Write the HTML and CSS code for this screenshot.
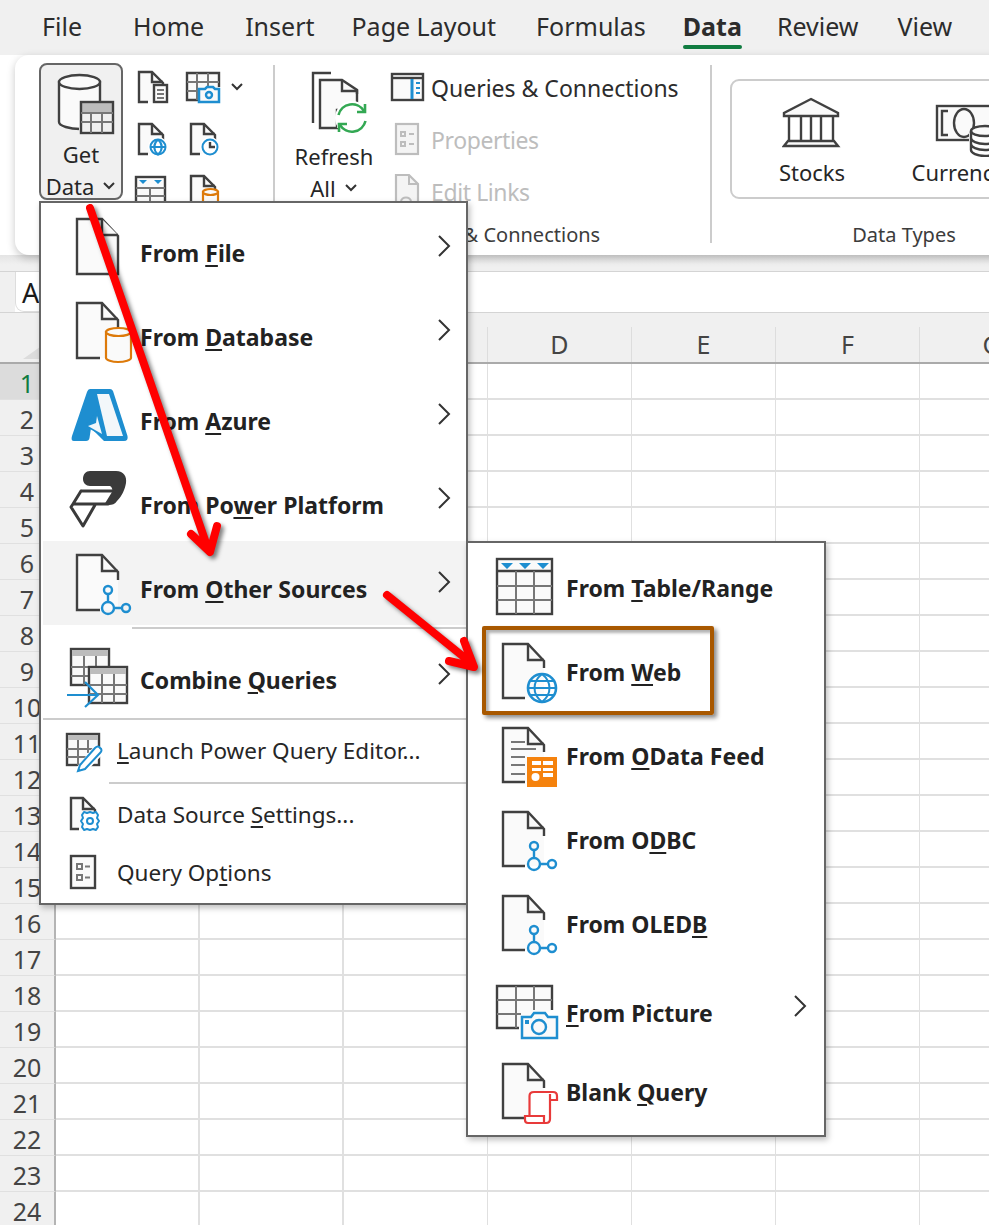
FILE: index.html
```html
<!DOCTYPE html>
<html lang="en">
<head>
<meta charset="utf-8">
<title>Excel Get Data menu</title>
<link rel="stylesheet" href="styles.css">
</head>
<body>
<svg class="defs" aria-hidden="true">
  <symbol id="doc" viewBox="0 0 70 70"><path class="ln" d="M11 7H36L52 24V62H11Z"/><path class="ln" d="M36 7V23H52"/></symbol>
  <symbol id="doc-cut" viewBox="0 0 70 70"><path class="fillonly" d="M11 7H36L52 24V62H11Z"/><path class="ln nofill" d="M34 62H11V7H36L52 24V32"/><path class="ln nofill" d="M36 7V23H52"/></symbol>
  <symbol id="doc2-cut" viewBox="0 0 70 70"><path class="fillonly" d="M13 8H38L54 25V62H13Z"/><path class="ln nofill" d="M35 62H13V8H38L54 25V32"/><path class="ln nofill" d="M38 8V24H54"/></symbol>
  <symbol id="net" viewBox="0 0 70 70"><path class="bl" d="M44 46V54M50 60H58"/><circle class="bl" cx="44" cy="42" r="4"/><circle class="bl" cx="44" cy="60" r="6"/><circle class="bl" cx="62" cy="60" r="4"/></symbol>
  <symbol id="sdoc" viewBox="0 0 40 40"><path class="fillonly" d="M7 4H20L31 15V34H7Z"/><path class="ln nofill" d="M16 34H7V4H20L31 15V20"/><path class="ln nofill" d="M20 4V14H31"/></symbol>
</svg>

<header class="tabs">
  <span class="tab tab-file">File</span>
  <span class="tab tab-home">Home</span>
  <span class="tab tab-insert">Insert</span>
  <span class="tab tab-layout">Page Layout</span>
  <span class="tab tab-formulas">Formulas</span>
  <span class="tab tab-data">Data</span>
  <span class="tab tab-review">Review</span>
  <span class="tab tab-view">View</span>
</header>

<section class="ribbon">
  <div class="group group-get">
    <div class="group-body">
      <div class="getdata">
        <svg class="ico-getdata" viewBox="0 0 83 74" aria-hidden="true">
          <path class="ln" d="M19 17V57C19 61 30 64 40 64H60V17Z"/>
          <ellipse class="ln" cx="39.500" cy="17" rx="20.500" ry="7"/>
          <rect class="cut" x="39" y="36" width="36" height="36"/>
          <path class="tb-head" d="M42 38H73V48H42Z"/>
          <rect class="ln nofill" x="41" y="37" width="32" height="31"/>
          <path class="gr" d="M41 48H73M41 57H73M51 48V68M62 48V68"/>
        </svg>
        <span class="getdata-l">Get</span>
        <span class="getdata-l">Data<svg class="chev-d" viewBox="0 0 14 10"><path d="M2 2L7 7L12 2"/></svg></span>
      </div>
      <div class="mini-grid">
        <svg class="mini" viewBox="0 0 40 40"><use href="#sdoc"/><rect class="ln" x="22" y="17" width="13" height="17"/><path class="gr" d="M25 22H32M25 26H32M25 30H32"/></svg>
        <div class="mini-wide">
          <svg class="mini" viewBox="0 0 40 40"><path class="ln" d="M17 32H3V5H35V19"/><path class="gr" d="M3 14H35M3 23H15M13 5V32M24 5V19"/><path class="cam" d="M15 21H21L23 19H29L31 21H35V34H15Z"/><circle class="bl" cx="25" cy="27" r="3"/></svg>
          <svg class="chev-d chev-mini" viewBox="0 0 14 10"><path d="M2 2L7 7L12 2"/></svg>
        </div>
        <svg class="mini" viewBox="0 0 40 40"><use href="#sdoc"/><circle class="halo" cx="26" cy="27" r="10"/><circle class="blt" cx="26" cy="27" r="7.500"/><path class="blt" d="M18.500 27H33.500M26 19.500C21 24 21 30 26 34.500C31 30 31 24 26 19.500"/></svg>
        <svg class="mini" viewBox="0 0 40 40"><use href="#sdoc"/><circle class="halo" cx="26" cy="27" r="10"/><circle class="blw" cx="26" cy="27" r="7.500"/><path class="dk" d="M26 22V27H31"/></svg>
        <svg class="mini" viewBox="0 0 40 40"><rect class="ln" x="4" y="5" width="29" height="28"/><path class="gr" d="M4 16H33M4 24H33M18 16V33"/><path class="tri" d="M7 8H15L11 12ZM22 8H30L26 12Z"/></svg>
        <svg class="mini" viewBox="0 0 40 40"><use href="#sdoc"/><rect class="cylb" x="19" y="20" width="15" height="16"/><ellipse class="cylb" cx="26.500" cy="20" rx="7.500" ry="3"/></svg>
      </div>
    </div>
  </div>

  <div class="group group-qc">
    <div class="group-body">
      <div class="refresh">
        <svg class="ico-refresh" viewBox="0 0 60 60" aria-hidden="true">
          <path class="ln nofill" d="M27 3H9V53"/>
          <path class="ln" d="M38 10H16V58H33V40H53V20Z"/><path class="fillonly" d="M33 58H37V40H33Z"/>
          <path class="ln nofill" d="M38 10V21H53V24"/>
          <circle class="halo" cx="48" cy="48" r="17"/>
          <path class="gn" d="M34.500 45A14 14 0 0 1 60 41M61.500 51A14 14 0 0 1 36 55"/>
          <path class="gn" d="M61 34V42H53M35 62V54H43"/>
        </svg>
        <span class="refresh-l">Refresh</span>
        <span class="refresh-l refresh-all">All<svg class="chev-d" viewBox="0 0 14 10"><path d="M2 2L7 7L12 2"/></svg></span>
      </div>
      <div class="qlist">
        <div class="qrow">
          <svg class="mini" viewBox="0 0 40 40"><rect class="ln" x="5" y="6" width="31" height="26"/><path class="dk" d="M5 10H36"/><path class="blthick" d="M25 11V31"/><path class="blt" d="M29 15H33M29 20H33M29 25H33"/></svg>
          <span class="qtext">Queries &amp; Connections</span>
        </div>
        <div class="qrow">
          <svg class="mini" viewBox="0 0 40 40"><rect class="lg" x="9" y="4" width="22" height="30"/><path class="lgt" d="M14 12H18V16H14ZM14 22H18V26H14ZM22 14H27M22 24H27"/></svg>
          <span class="qtext qtext-off">Properties</span>
        </div>
        <div class="qrow">
          <svg class="mini" viewBox="0 0 40 40"><path class="lg" d="M9 3H22L31 12V34H9Z"/><path class="lgt" d="M22 3V12H31M14 30C14 24 24 24 24 30"/></svg>
          <span class="qtext qtext-off">Edit Links</span>
        </div>
      </div>
    </div>
    <div class="group-label">Queries &amp; Connections</div>
  </div>

  <div class="group group-types">
    <div class="group-body">
      <div class="typebox">
        <div class="type type-stocks">
          <svg class="ico-stocks" viewBox="0 0 60 52" aria-hidden="true">
            <path class="ln" d="M29 2L56 16V19H2V16Z"/>
            <path class="ln nofill" d="M7 19V44M19 19V44M29 19V44M39 19V44M51 19V44"/>
            <path class="ln" d="M6 44H52L56 49H2Z"/>
          </svg>
          <span>Stocks</span>
        </div>
        <div class="type type-curr">
          <svg class="ico-curr" viewBox="0 0 90 60" aria-hidden="true">
            <rect class="ln" x="2" y="9" width="84" height="34"/>
            <path class="ln nofill" d="M13 14H7V38H13"/>
            <ellipse class="ln nofill" cx="29" cy="26" rx="10" ry="14"/>
            <path class="cut" d="M34 36H60V60H34Z"/>
            <ellipse class="ln" cx="50" cy="34" rx="14" ry="5"/>
            <path class="ln nofill" d="M36 34V53C36 56 42 59 50 59C58 59 64 56 64 53V34M36 41C36 44 42 47 50 47C58 47 64 44 64 41M36 47C36 50 42 53 50 53C58 53 64 50 64 47"/>
          </svg>
          <span>Currency</span>
        </div>
      </div>
    </div>
    <div class="group-label">Data Types</div>
  </div>
</section>

<div class="band"></div>
<div class="formula">
  <div class="namebox">A</div>
</div>

<section class="sheet">
  <div class="colhead">
    <div class="corner"><i class="corner-tri"></i></div>
    <div class="col"></div><div class="col"></div><div class="col"></div><div class="col">D</div><div class="col">E</div><div class="col">F</div><div class="col">G</div>
  </div>
  <div class="row row-on"><div class="num">1</div><div class="cells"></div></div>
  <div class="row"><div class="num">2</div><div class="cells"></div></div>
  <div class="row"><div class="num">3</div><div class="cells"></div></div>
  <div class="row"><div class="num">4</div><div class="cells"></div></div>
  <div class="row"><div class="num">5</div><div class="cells"></div></div>
  <div class="row"><div class="num">6</div><div class="cells"></div></div>
  <div class="row"><div class="num">7</div><div class="cells"></div></div>
  <div class="row"><div class="num">8</div><div class="cells"></div></div>
  <div class="row"><div class="num">9</div><div class="cells"></div></div>
  <div class="row"><div class="num">10</div><div class="cells"></div></div>
  <div class="row"><div class="num">11</div><div class="cells"></div></div>
  <div class="row"><div class="num">12</div><div class="cells"></div></div>
  <div class="row"><div class="num">13</div><div class="cells"></div></div>
  <div class="row"><div class="num">14</div><div class="cells"></div></div>
  <div class="row"><div class="num">15</div><div class="cells"></div></div>
  <div class="row"><div class="num">16</div><div class="cells"></div></div>
  <div class="row"><div class="num">17</div><div class="cells"></div></div>
  <div class="row"><div class="num">18</div><div class="cells"></div></div>
  <div class="row"><div class="num">19</div><div class="cells"></div></div>
  <div class="row"><div class="num">20</div><div class="cells"></div></div>
  <div class="row"><div class="num">21</div><div class="cells"></div></div>
  <div class="row"><div class="num">22</div><div class="cells"></div></div>
  <div class="row"><div class="num">23</div><div class="cells"></div></div>
  <div class="row"><div class="num">24</div><div class="cells"></div></div>
</section>

<nav class="menu menu-main">
  <div class="item">
    <svg class="ico" viewBox="0 0 70 70"><use href="#doc"/></svg>
    <span class="lab">From <u>F</u>ile</span>
    <svg class="chev" viewBox="0 0 14 24"><path d="M2 2L12 12L2 22"/></svg>
  </div>
  <div class="item">
    <svg class="ico" viewBox="0 0 70 70"><use href="#doc-cut"/><path class="cylo" d="M40 36V62C40 64 46 66 52 66C59 66 65 64 65 62V36Z"/><ellipse class="cylo" cx="52.500" cy="36" rx="12.500" ry="4"/></svg>
    <span class="lab">From <u>D</u>atabase</span>
    <svg class="chev" viewBox="0 0 14 24"><path d="M2 2L12 12L2 22"/></svg>
  </div>
  <div class="item">
    <svg class="ico" viewBox="0 0 70 70">
      <path class="az" d="M24 9H44Q46 9 47 11L61.500 56Q62.500 61 58 61H38L25 48L23.500 58Q23 61 20 61H8Q4.500 61 6 56L21 12Q22 9 24 9Z"/>
      <path class="azw" d="M31 14H43L57 56H41Z"/>
      <path class="az" d="M20 44L32 30L36 56L24 49Z"/>
      <path class="azw" d="M22 46L30 43L31 36L36 54Z"/>
    </svg>
    <span class="lab">From <u>A</u>zure</span>
    <svg class="chev" viewBox="0 0 14 24"><path d="M2 2L12 12L2 22"/></svg>
  </div>
  <div class="item">
    <svg class="ico" viewBox="0 0 70 70">
      <path class="pp" d="M24 7H50C58 7 61 13 60 19C59 25 56 32 51 37C49 40 46 41 43 41H38L46 28C47 26 46 23 44 22H24C20 22 17 19 17 15C17 10 20 7 24 7Z"/>
      <path class="ppl" d="M15 27H48M15 27L7 40H42M7 40L5 43L17 62L29 41"/>
    </svg>
    <span class="lab">From Po<u>w</u>er Platform</span>
    <svg class="chev" viewBox="0 0 14 24"><path d="M2 2L12 12L2 22"/></svg>
  </div>
  <div class="item item-on">
    <svg class="ico" viewBox="0 0 70 70"><use href="#doc-cut"/><path class="bl" d="M42 46V54M48 60H56"/><circle class="bl" cx="42" cy="42" r="4"/><circle class="bl" cx="42" cy="60" r="6"/><circle class="bl" cx="60" cy="60" r="4"/></svg>
    <span class="lab">From <u>O</u>ther Sources</span>
    <svg class="chev" viewBox="0 0 14 24"><path d="M2 2L12 12L2 22"/></svg>
  </div>
  <div class="sep sep-inset-a"></div>
  <div class="item item-combine">
    <svg class="ico" viewBox="0 0 70 70">
      <rect class="ln" x="5" y="9" width="38" height="36"/><path class="tb-head" d="M6 10H42V16H6Z"/><path class="gr" d="M5 27H43M5 36H43M18 16V45M30 16V45"/>
      <rect class="ln" x="23" y="27" width="38" height="36"/><path class="tb-head" d="M24 28H60V34H24Z"/><path class="gr" d="M23 45H61M23 54H61M36 34V63M48 34V63"/>
      <path class="bla" d="M1 55H32M19 42L32 55L19 67"/>
    </svg>
    <span class="lab lab-combine">Combine <u>Q</u>ueries</span>
    <svg class="chev" viewBox="0 0 14 24"><path d="M2 2L12 12L2 22"/></svg>
  </div>
  <div class="sep"></div>
  <div class="item item-small item-launch">
    <svg class="ico-s" viewBox="0 0 46 46">
      <rect class="ln" x="5" y="6" width="32" height="31"/><path class="tb-head" d="M6 7H36V12H6Z"/><path class="gr" d="M5 21H37M5 29H24M16 12V37M26 12V25"/>
      <path class="cut" d="M15 39L33 17L42 25L24 44Z"/>
      <path class="pen" d="M18 37L33 20C35 18 37 18 38 20C40 21 40 23 38 25L23 41L16 43Z"/>
    </svg>
    <span class="lab-s"><u>L</u>aunch Power Query Editor...</span>
  </div>
  <div class="sep sep-inset-b"></div>
  <div class="item item-small item-source">
    <svg class="ico-s" viewBox="0 0 46 46">
      <path class="fillonly" d="M9 5H21L33 17V36H9Z"/>
      <path class="ln nofill" d="M17 36H9V5H21L33 17V20"/><path class="ln nofill" d="M21 5V16H33"/>
      <path class="gear" d="M28 19L31 20L34 19L36 22L35 25L37 28L35 31L36 34L34 37L31 36L28 37L25 36L22 37L20 34L21 31L19 28L21 25L20 22L22 19L25 20Z"/>
      <circle class="gear" cx="28" cy="28" r="3"/>
    </svg>
    <span class="lab-s">Data Source <u>S</u>ettings...</span>
  </div>
  <div class="item item-small item-options">
    <svg class="ico-s" viewBox="0 0 46 46">
      <rect class="ln" x="9" y="5" width="24" height="32"/>
      <path class="grs" d="M15 13H20V18H15ZM15 24H20V29H15ZM23 15.500H28M23 26.500H28"/>
    </svg>
    <span class="lab-s">Query Op<u>t</u>ions</span>
  </div>
</nav>

<nav class="menu menu-sub">
  <div class="item">
    <svg class="ico" viewBox="0 0 70 70">
      <rect class="ln" x="7" y="7" width="55" height="55"/><path class="dk" d="M7 19H62"/><path class="gr" d="M7 34H62M7 48H62M26 19V62M44 19V62"/>
      <path class="tri" d="M11 11H23L17 17ZM29 11H41L35 17ZM47 11H59L53 17Z"/>
    </svg>
    <span class="lab lab-sub">From <u>T</u>able/Range</span>
  </div>
  <div class="item">
    <svg class="ico" viewBox="0 0 70 70"><use href="#doc2-cut"/>
      <circle class="blb" cx="52" cy="52" r="14"/>
      <path class="blt" d="M38 52H66M40 45H64M40 59H64M52 38C42 46 42 58 52 66C62 58 62 46 52 38"/>
    </svg>
    <span class="lab lab-sub">From <u>W</u>eb</span>
  </div>
  <div class="item">
    <svg class="ico" viewBox="0 0 70 70"><use href="#doc2-cut"/>
      <path class="gr" d="M21 22H35M21 29H46M21 37H35M21 45H35M21 54H35"/>
      <rect class="ors" x="37" y="37" width="30" height="30"/>
      <path class="orw" d="M42 41H51V45H42ZM53 41H63V45H53ZM42 48H51V51H42ZM53 48H63V51H53ZM53 53H63V57H53Z"/><circle class="orw" cx="45.500" cy="57" r="4"/>
    </svg>
    <span class="lab lab-sub">From <u>O</u>Data Feed</span>
  </div>
  <div class="item">
    <svg class="ico" viewBox="0 0 70 70"><use href="#doc2-cut"/><use href="#net"/></svg>
    <span class="lab lab-sub">From O<u>D</u>BC</span>
  </div>
  <div class="item">
    <svg class="ico" viewBox="0 0 70 70"><use href="#doc2-cut"/><use href="#net"/></svg>
    <span class="lab lab-sub">From OLED<u>B</u></span>
  </div>
  <div class="item">
    <svg class="ico" viewBox="0 0 70 70">
      <path class="ln" d="M29 56H7V14H62V38"/><path class="gr" d="M7 28H62M7 42H31M26 14V56M44 14V38"/>
      <path class="cams" d="M32 45H41L44 41H55L58 45H67V66H32Z"/>
      <circle class="bl" cx="49" cy="55" r="7"/>
      <rect class="sq" x="35" y="48" width="4" height="4"/>
    </svg>
    <span class="lab lab-pic"><u>F</u>rom Picture</span>
    <svg class="chev" viewBox="0 0 14 24"><path d="M2 2L12 12L2 22"/></svg>
  </div>
  <div class="item">
    <svg class="ico" viewBox="0 0 70 70"><use href="#doc2-cut"/>
      <path class="cut" d="M38 36H67V44H62V67H34V60H38Z"/>
      <path class="rd" d="M39.500 60V40Q39.500 36 44 36H63Q67 36 67 40V44H60M60 38V63Q60 67 56 67H38Q35 67 35 64V60H54V66"/>
    </svg>
    <span class="lab lab-sub">Blank <u>Q</u>uery</span>
  </div>
</nav>

<div class="callout"></div>

<svg class="arrows" viewBox="0 0 989 1225" aria-hidden="true">
  <path d="M90 208L207 546M191 534L210 552L217 526"/>
  <path d="M387 595L470 662M449 661L474 667L464 641"/>
</svg>
</body>
</html>
```

FILE: styles.css
```css
* { box-sizing: border-box; }
html, body { margin: 0; padding: 0; }
body {
  position: relative;
  width: 989px;
  height: 1225px;
  overflow: hidden;
  background: #fff;
  color: #262626;
  font-family: "Noto Sans", "Open Sans", sans-serif;
}
.defs { position: absolute; width: 0; height: 0; }
u { text-underline-offset: 3px; text-decoration-thickness: 1.5px; }

/* tabs */
.tabs { display: flex; height: 55px; background: #f0f0f0; padding-left: 42px; align-items: flex-start; }
.tab { font-size: 25px; line-height: 32px; padding-top: 10px; color: #2c2c2c; white-space: nowrap; position: relative; height: 50px; }
.tab-home { margin-left: 51px; }
.tab-insert { margin-left: 41px; }
.tab-layout { margin-left: 37px; }
.tab-formulas { margin-left: 40px; }
.tab-data { margin-left: 37px; font-weight: 700; }
.tab-review { margin-left: 35px; }
.tab-view { margin-left: 39px; }
.tab-data::after { content: ""; position: absolute; left: 0; right: 0; bottom: 1px; height: 4px; border-radius: 2px; background: #107c41; }

/* ribbon */
.ribbon {
  display: flex;
  width: 1100px;
  height: 200px;
  margin-left: 15px;
  padding-top: 10px;
  background: #fff;
  border-radius: 14px 0 0 14px;
  box-shadow: 0 3px 8px rgba(0, 0, 0, .22);
  position: relative;
}
.group { display: flex; flex-direction: column; height: 178px; border-right: 2px solid #ccc; flex: none; }
.group-body { display: flex; height: 157px; flex: none; }
.group-label { font-size: 20px; line-height: 26px; flex: none; text-align: center; color: #3c3c3c; white-space: nowrap; }
.group-get { width: 260px; }
.group-qc { width: 437px; }
.group-types { width: 384px; border-right: 0; }

.getdata {
  display: flex; flex-direction: column; align-items: center;
  width: 84px; height: 137px; margin: -2px 0 0 24px;
  background: #f0f0f0; border: 2px solid #666; border-radius: 8px;
}
.ico-getdata { width: 83px; height: 74px; flex: none; margin-bottom: -1px; }
.getdata-l { font-size: 22px; line-height: 32px; display: flex; align-items: center; gap: 8px; white-space: nowrap; }
.chev-d { width: 14px; height: 10px; fill: none; stroke: #333; stroke-width: 2; flex: none; }
.mini-grid { display: grid; grid-template-columns: 40px 62px; grid-auto-rows: 40px; gap: 12px; margin: 3px 0 0 9px; }
.mini { width: 40px; height: 40px; flex: none; overflow: visible; }
.mini-wide { display: flex; align-items: flex-start; width: 62px; }
.chev-mini { margin: 14px 0 0 6px; }

.refresh { display: flex; flex-direction: column; align-items: center; width: 88px; margin-left: 15px; }
.ico-refresh { width: 60px; height: 60px; flex: none; margin-top: 5px; overflow: visible; }
.refresh-l { font-size: 22px; line-height: 32px; display: flex; align-items: center; gap: 8px; }
.refresh-l:first-of-type { margin-top: 10px; }
.qlist { display: flex; flex-direction: column; gap: 12px; margin: 3px 0 0 9px; }
.qrow { display: flex; align-items: center; height: 40px; gap: 4px; }
.qtext { font-size: 23px; white-space: nowrap; color: #2c2c2c; }
.qtext-off { color: #bdbdbd; letter-spacing: -.4px; }

.typebox {
  display: flex; width: 375px; height: 120px; margin: 14px 0 0 18px;
  border: 2px solid #ccc; border-radius: 9px;
}
.type { display: flex; flex-direction: column; align-items: center; font-size: 22px; flex: none; white-space: nowrap; }
.type-stocks { width: 94px; margin-left: 33px; }
.type-curr { width: 100px; margin-left: 49px; }
.ico-stocks { width: 60px; height: 52px; margin-top: 16px; margin-bottom: 8px; }
.ico-curr { width: 90px; height: 60px; margin: 16px 0 0 27px; align-self: flex-start; }

/* formula bar */
.band { height: 17px; background: linear-gradient(#e4e4e4, #f0f0f0 60%); border-bottom: 1px solid #d4d4d4; }
.formula { height: 41px; padding-left: 15px; background: #fff; border-bottom: 1px solid #d4d4d4; position: relative; }
.namebox { width: 120px; height: 40px; background: #fff; border: 1px solid #ddd; border-top: 0; border-radius: 0 0 9px 9px; font-size: 27px; line-height: 42px; padding-left: 6px; color: #1a1a1a; }
.formula::before { content: ""; position: absolute; left: 0; top: 0; width: 15px; height: 40px; background: #f0f0f0; }

/* sheet */
.colhead { display: flex; align-items: flex-end; height: 51px; background: #f0f0f0; border-bottom: 2px solid #aaa; }
.corner { width: 56px; height: 49px; position: relative; flex: none; border-right: 1px solid #ccc; }
.corner-tri { position: absolute; right: 8px; bottom: 3px; width: 24px; height: 17px; background: #dcdcdc; clip-path: polygon(100% 0, 100% 100%, 0 100%); }
.col { width: 144px; height: 35px; flex: none; text-align: center; font-size: 25px; line-height: 34px; color: #444; border-right: 1px solid #ddd; }
.row { display: flex; height: 36px; }
.num { width: 56px; flex: none; background: #f0f0f0; border-right: 2px solid #b4b4b4; border-bottom: 1px solid #e0e0e0; text-align: center; font-size: 25px; line-height: 36px; padding-top: 1px; color: #444; }
.row-on .num { background: #dcdcdc; color: #107c41; }
.cells {
  flex: 1;
  border-bottom: 2px solid #e0e0e0;
  background: repeating-linear-gradient(90deg, transparent 0, transparent 142.500px, #e0e0e0 142.500px, #e0e0e0 144px);
}

/* menus */
.menu {
  position: absolute;
  display: flex;
  flex-direction: column;
  background: #fff;
  border: 2px solid #666;
  box-shadow: 2px 3px 6px rgba(0, 0, 0, .25);
  padding: 2px 0 3px;
}
.menu-main { left: 39px; top: 201px; width: 429px; height: 704px; padding-left: 2px; }
.menu-sub { left: 466px; top: 541px; width: 360px; height: 596px; padding: 2px 0; }
.item { display: flex; align-items: center; height: 84px; flex: none; padding: 0 15px 0 23px; }
.item-on { background: #f3f3f3; }
.item-combine { height: 86px; }
.item-small { padding-left: 19px; }
.item-launch { height: 62px; }
.item-source { height: 64px; }
.item-options { height: 52px; }
.menu-sub .item { padding: 0 17px 0 22px; }
.ico { width: 70px; height: 70px; flex: none; overflow: visible; }
.ico-s { width: 46px; height: 46px; flex: none; overflow: visible; margin-right: 9px; }
.lab { margin: 12px 0 0 4px; font-size: 23px; font-weight: 700; color: #222; white-space: nowrap; line-height: 30px; }
.lab-combine { margin-top: 10px; }
.lab-sub { margin: 2px 0 0 6px; }
.lab-pic { margin: 11px 0 0 6px; }
.lab-s { font-size: 22.500px; color: #262626; white-space: nowrap; line-height: 30px; margin-top: -3px; }
.item-launch .lab-s { margin-top: -1px; }
.chev { width: 14px; height: 24px; flex: none; margin: -2px 0 0 auto; fill: none; stroke: #333; stroke-width: 2; }
.sep { height: 2px; margin: 0 0 0 0; background: #ccc; flex: none; }
.sep-inset-a { margin: 2px 0 3px 89px; }
.sep-inset-b { margin-left: 66px; }

/* svg paint */
.ln { fill: #fafafa; stroke: #404040; stroke-width: 2.400; }
.nofill { fill: none; }
.fillonly { fill: #fafafa; stroke: none; }
.cut { fill: #fff; stroke: none; }
.getdata .cut { fill: #f0f0f0; }
.halo { fill: #fff; stroke: none; }
.gr { fill: none; stroke: #777; stroke-width: 2; }
.grs { fill: none; stroke: #777; stroke-width: 2; }
.dk { fill: none; stroke: #404040; stroke-width: 2.400; }
.tb-head { fill: #bcbcbc; stroke: none; }
.bl { fill: none; stroke: #1e8ed0; stroke-width: 2.400; }
.bla { fill: none; stroke: #1e8ed0; stroke-width: 2.200; }
.blt { fill: none; stroke: #1e8ed0; stroke-width: 2; }
.blb { fill: none; stroke: #1e8ed0; stroke-width: 2.600; }
.blw { fill: #fff; stroke: #1e8ed0; stroke-width: 2; }
.blthick { fill: none; stroke: #1e8ed0; stroke-width: 3; }
.cam, .cams { fill: #fafafa; stroke: #1e8ed0; stroke-width: 2.500; }
.sq { fill: #1e8ed0; }
.tri { fill: #1e8ed0; }
.cylb { fill: #fafafa; stroke: #dd7a0a; stroke-width: 2.200; }
.cylo { fill: #fafafa; stroke: #dd7a0a; stroke-width: 2.200; }
.az { fill: #1e8ed0; }
.azw { fill: #f3f7fa; }
.pp { fill: #3a3a3a; }
.ppl { fill: none; stroke: #3a3a3a; stroke-width: 3; stroke-linejoin: round; stroke-linecap: round; }
.pen { fill: #fff; stroke: #1e8ed0; stroke-width: 2; }
.gear { fill: #fff; stroke: #1e8ed0; stroke-width: 2; stroke-linejoin: round; }
.ors { fill: #f5820d; }
.orw { fill: #fff; }
.rd { fill: none; stroke: #e83a3a; stroke-width: 2.200; }
.lg { fill: #f4f4f4; stroke: #bdbdbd; stroke-width: 2.200; }
.lgt { fill: none; stroke: #bdbdbd; stroke-width: 2; }
.gn { fill: none; stroke: #33a853; stroke-width: 2.600; }

/* annotations */
.callout {
  position: absolute; left: 482px; top: 626px; width: 232px; height: 89px;
  border: 4px solid #a85800; border-radius: 2px;
  box-shadow: 3px 3px 4px rgba(0, 0, 0, .45), inset 3px 3px 3px rgba(0, 0, 0, .3);
}
.arrows {
  position: absolute; left: 0; top: 0; width: 989px; height: 1225px;
  fill: none; stroke: #ff0000; stroke-width: 8; stroke-linecap: round; stroke-linejoin: round;
  filter: drop-shadow(3px 3px 2px rgba(0, 0, 0, .5));
  pointer-events: none;
}
```
